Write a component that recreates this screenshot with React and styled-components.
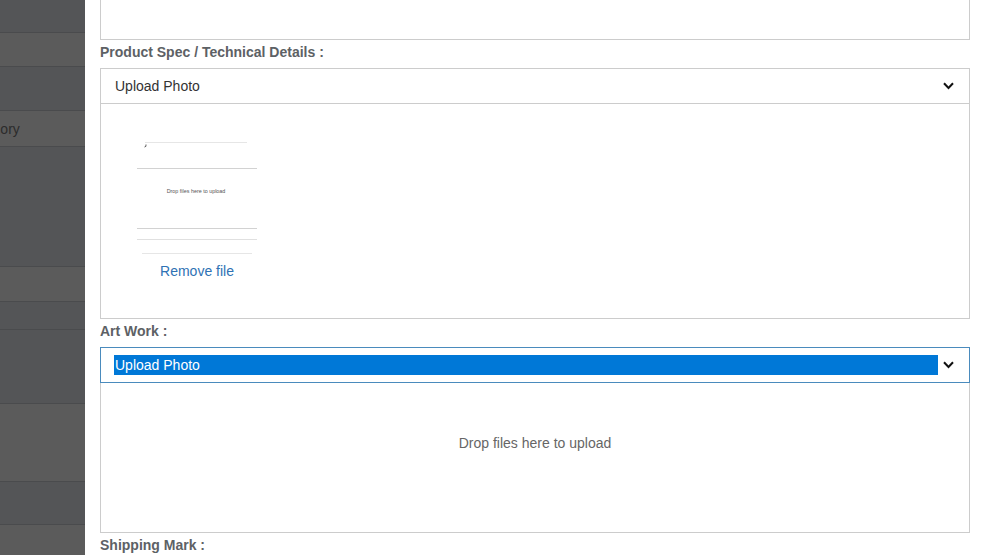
import React from 'react';
import styled, { createGlobalStyle } from 'styled-components';

const GlobalStyle = createGlobalStyle`
  html, body {
    margin: 0;
    padding: 0;
    height: 555px;
    overflow: hidden;
    background: #fff;
    font-family: "Liberation Sans", Arial, sans-serif;
  }
`

const StyledApp = styled.div`
  display: flex;
  height: 555px;
  overflow: hidden;
`
const StyledSidebar = styled.nav`
  width: 85px;
  flex-shrink: 0;
  background-color: #545557;
  overflow: hidden;
`
const StyledMenu = styled.ul`
  list-style: none;
  margin: 0 0 0 -37px;
  padding: 0;
  width: 200px;
`
const StyledMenuItem = styled.li`
  height: ${props => props.h}px;
  box-sizing: border-box;
  border-bottom: 1px solid #4a4b4d;
  background-color: ${props => (props.light ? '#5b5b5b' : '#545557')};
  color: #2c2c2c;
  font-size: 14px;
  display: flex;
  align-items: center;
`
const StyledMain = styled.main`
  flex: 1;
  padding: 0 14px 0 15px;
  margin-top: -40px;
`
const StyledTextBox = styled.div`
  height: 80px;
  box-sizing: border-box;
  border: 1px solid #cccccc;
`
const StyledLabel = styled.div`
  margin: 3px 0 7px;
  line-height: 18px;
  font-size: 14px;
  font-weight: bold;
  color: #5d6165;
`
const StyledSelect = styled.div`
  height: 36px;
  box-sizing: border-box;
  border: 1px solid ${props => (props.focused ? '#4a8bbd' : '#cccccc')};
  display: flex;
  align-items: center;
  padding: 0 15px 0 13px;
  gap: 5px;
`
const StyledValue = styled.div`
  flex: 1;
  padding-left: 1px;
  line-height: 20px;
  font-size: 14px;
  color: ${props => (props.selected ? '#ffffff' : '#333333')};
  background-color: ${props => (props.selected ? '#0078d7' : 'transparent')};
`
const StyledDropzone = styled.div`
  min-height: 150px;
  box-sizing: border-box;
  border: 1px solid #cccccc;
  border-top: none;
  padding: 20px;
`
const StyledMessage = styled.div`
  margin: 30px 0 26px;
  text-align: center;
  font-size: 14px;
  line-height: 20px;
  color: #666666;
`
const StyledPreview = styled.div`
  display: inline-flex;
  flex-direction: column;
  align-items: center;
  margin: 16px;
  width: 120px;
`
const StyledRemove = styled.a`
  display: block;
  line-height: 22px;
  font-size: 14px;
  color: #2f72b4;
  text-decoration: none;
  cursor: pointer;
`

const Chevron = () => (
  <svg width="11" height="8" viewBox="0 0 11 8">
    <polyline points="1,1.2 5.5,6 10,1.2" fill="none" stroke="#111" strokeWidth="2" />
  </svg>
)

const Thumbnail = () => (
  <svg width="120" height="120" viewBox="0 0 120 120">
    <rect width="120" height="120" fill="#fff" />
    <line x1="8" y1="2.5" x2="110" y2="2.5" stroke="#e6e6e6" />
    <path d="M9 4.5 Q9.5 7 7.5 7" fill="none" stroke="#333" strokeWidth="0.8" />
    <line x1="0" y1="28.5" x2="120" y2="28.5" stroke="#d2d2d2" />
    <text x="59" y="53" fontSize="5.4" textAnchor="middle" fill="#555" fontFamily="Liberation Sans, Arial, sans-serif">
      Drop files here to upload
    </text>
    <line x1="0" y1="88.5" x2="120" y2="88.5" stroke="#d2d2d2" />
    <line x1="0" y1="99.5" x2="120" y2="99.5" stroke="#e0e0e0" />
    <line x1="5" y1="113.5" x2="115" y2="113.5" stroke="#e6e6e6" />
  </svg>
)

const menu = [
  { h: 33, light: false },
  { h: 34, light: true },
  { h: 44, light: false },
  { h: 36, light: true, text: 'Category' },
  { h: 120, light: false },
  { h: 35, light: true },
  { h: 28, light: false },
  { h: 74, light: false },
  { h: 78, light: true },
  { h: 43, light: false },
  { h: 40, light: true },
];

function App() {
  return (
    <StyledApp>
      <GlobalStyle />
      <StyledSidebar>
        <StyledMenu>
          {menu.map((item, i) => (
            <StyledMenuItem key={i} h={item.h} light={item.light}>{item.text}</StyledMenuItem>
          ))}
        </StyledMenu>
      </StyledSidebar>
      <StyledMain>
        <StyledTextBox />
        <StyledLabel>Product Spec / Technical Details :</StyledLabel>
        <StyledSelect>
          <StyledValue>Upload Photo</StyledValue>
          <Chevron />
        </StyledSelect>
        <StyledDropzone>
          <StyledPreview>
            <Thumbnail />
            <StyledRemove>Remove file</StyledRemove>
          </StyledPreview>
        </StyledDropzone>
        <StyledLabel>Art Work :</StyledLabel>
        <StyledSelect focused>
          <StyledValue selected>Upload Photo</StyledValue>
          <Chevron />
        </StyledSelect>
        <StyledDropzone>
          <StyledMessage>Drop files here to upload</StyledMessage>
        </StyledDropzone>
        <StyledLabel>Shipping Mark :</StyledLabel>
      </StyledMain>
    </StyledApp>
  );
}

export default App;
